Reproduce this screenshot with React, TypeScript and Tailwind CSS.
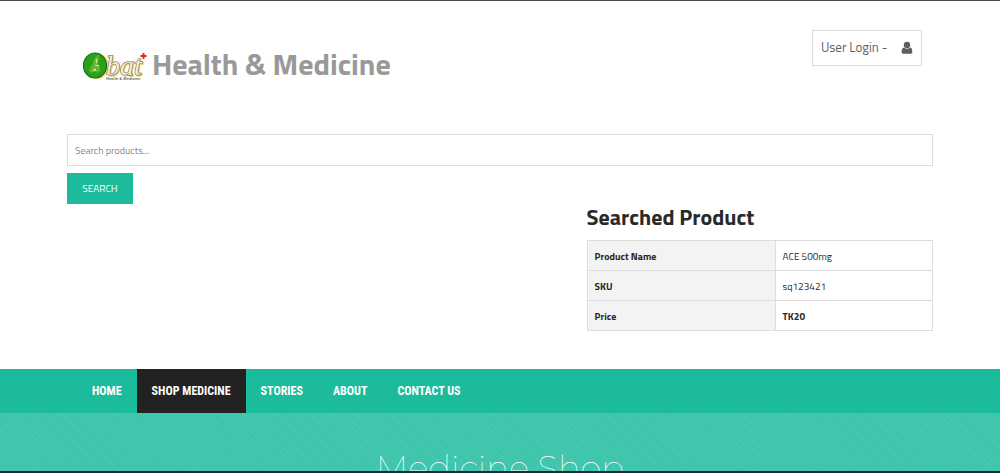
import React from "react";

const details = [
  { label: "Product Name", value: "ACE 500mg", strong: false },
  { label: "SKU", value: "sq123421", strong: false },
  { label: "Price", value: "TK20", strong: true },
];

const links = [
  { label: "HOME", active: false },
  { label: "SHOP MEDICINE", active: true },
  { label: "STORIES", active: false },
  { label: "ABOUT", active: false },
  { label: "CONTACT US", active: false },
];

function Logo() {
  return (
    <svg viewBox="0 -3 66 36" className="h-9 w-[66px] shrink-0" aria-label="Obat">
      <ellipse cx="14.5" cy="17" rx="12.500" ry="13" fill="#f3d86b" />
      <ellipse cx="13" cy="16.5" rx="11.500" ry="12.500" fill="#2ba01b" stroke="#137018" strokeWidth="1.2" />
      <path d="M16 6c-3 2-5 5-5 8-1 3-5 6-3 9 2 2 4 0 5-1 1 2 4 2 5 0 1-3-2-6-2-9 1-2 2-5 0-7z" fill="#5db52f" />
      <path d="M15 10c-1 1-1 2 0 4m-2 2 4 1m-6 5 2-2 1 2" fill="none" stroke="#d9e98a" strokeWidth="1.2" />
      <text x="24" y="26" fontSize="28" fontStyle="italic" className="font-['Liberation_Serif',serif] drop-shadow-[1px_1px_0px_#f0d070]" fill="#f3ecd2" stroke="#8a7f62" strokeWidth="1.4" paintOrder="stroke">bat</text>
      <path d="M61.500 4v6M58.500 7h6" stroke="#e52a1c" strokeWidth="2" />
      <text x="24" y="31" fontSize="4" fontWeight="700" className="font-['Liberation_Sans',sans-serif]" fill="#786b50">Health &amp; Medicine</text>
    </svg>
  );
}

export default function App() {
  return (
    <div className="border-t border-[#48494f] bg-white font-['Titillium_Web','Open_Sans',sans-serif] text-[#292929]">
      <div className="mx-auto max-w-[866px]">
        <header className="flex h-[133px] items-start justify-between pr-[11px] pl-[15px] pt-[29px]">
          <a href="#home" className="mt-4 flex items-center gap-1">
            <Logo />
            <span className="text-[30px] leading-9 font-bold text-[#999999]">Health &amp; Medicine</span>
          </a>
          <button type="button" className="flex h-9 w-[110px] items-center justify-between border border-[#dddddd] px-2 text-[13px] text-[#626262]">
            <span className="whitespace-nowrap">User Login -</span>
            <svg viewBox="0 0 12 14" className="h-3.5 w-3 shrink-0" aria-hidden="true" fill="#5e5e5e">
              <circle cx="6" cy="4" r="3.200" />
              <path d="M3 6.500C1 6.800.7 9 .7 11c0 1.100.7 1.800 1.800 1.800h7c1.100 0 1.800-.7 1.800-1.800 0-2-.3-4.200-2.300-4.500a4 4 0 0 1-6 0z" />
            </svg>
          </button>
        </header>
        <form onSubmit={(e) => e.preventDefault()}>
          <input type="search" aria-label="Search products" placeholder="Search products..." className="block h-8 w-full border border-[#dddddd] px-[7px] text-[10px] outline-none placeholder:text-[#888888]" />
          <button type="submit" className="mt-[7px] block h-[31px] w-[66px] bg-[#1cbb9b] text-[10px] text-white">SEARCH</button>
        </form>
        <section className="ml-auto w-2/5 pb-[38px]">
          <h2 className="h-9 text-[22px] leading-[26px] font-bold">Searched Product</h2>
          <table className="w-full border-collapse text-left text-[10px]">
            <tbody>
              {details.map((row) => (
                <tr key={row.label} className="h-[30px]">
                  <th scope="row" className="w-[188px] border border-[#dddddd] bg-[#f3f3f3] px-[7px] pt-[2px] font-bold">{row.label}</th>
                  <td className={row.strong ? "border border-[#dddddd] px-[7px] pt-[2px] font-bold" : "border border-[#dddddd] px-[7px] pt-[2px]"}>{row.value}</td>
                </tr>
              ))}
            </tbody>
          </table>
        </section>
      </div>
      <nav className="bg-[#1cbb9b]">
        <ul className="mx-auto flex max-w-[866px] pl-[10px]">
          {links.map((link) => (
            <li key={link.label}>
              <a href="#shop" aria-current={link.active ? "page" : undefined} className={`flex h-11 items-center px-[15px] font-['Roboto_Condensed','Roboto',sans-serif] text-[12px] font-bold whitespace-nowrap text-white ${link.active ? "bg-[#222222]" : ""}`}>{link.label}</a>
            </li>
          ))}
        </ul>
      </nav>
      <section className="h-[60px] overflow-hidden border-b-2 border-[#20283a] bg-[#3fc6ac] bg-[repeating-linear-gradient(45deg,rgba(255,255,255,0.03)_0px,rgba(255,255,255,0.03)_1px,transparent_1px,transparent_4px),repeating-linear-gradient(38deg,rgba(0,90,75,0.04)_0px,transparent_2px,transparent_7px)] pt-[32px] text-center">
        <h1 className="font-['Montserrat','Raleway','Inter',sans-serif] text-[34px] leading-[46px] font-thin text-white">Medicine Shop</h1>
      </section>
    </div>
  );
}
